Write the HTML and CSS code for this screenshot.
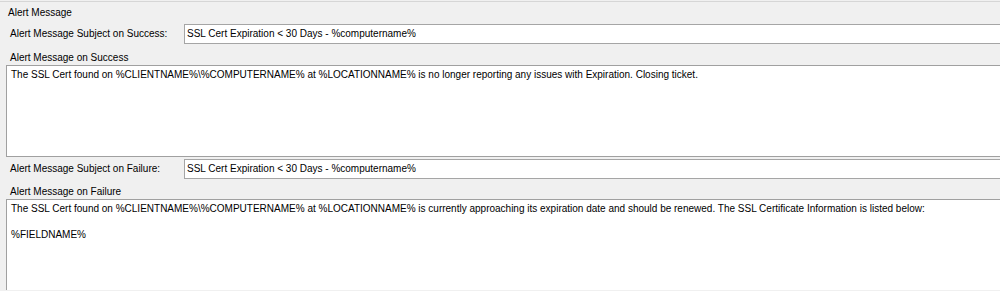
FILE: index.html
```html
<!DOCTYPE html>
<html>
<head>
<meta charset="utf-8">
<link rel="stylesheet" href="styles.css">
</head>
<body>
<div class="panel">
  <div class="heading">Alert Message</div>
  <div class="row">
    <div class="row-label">Alert Message Subject on Success:</div>
    <div class="input">SSL Cert Expiration &lt; 30 Days - %computername%</div>
  </div>
  <div class="field-label first">Alert Message on Success</div>
  <div class="textarea success">The SSL Cert found on %CLIENTNAME%\%COMPUTERNAME% at %LOCATIONNAME% is no longer reporting any issues with Expiration. Closing ticket.</div>
  <div class="row">
    <div class="row-label">Alert Message Subject on Failure:</div>
    <div class="input">SSL Cert Expiration &lt; 30 Days - %computername%</div>
  </div>
  <div class="field-label second">Alert Message on Failure</div>
  <div class="textarea failure">The SSL Cert found on %CLIENTNAME%\%COMPUTERNAME% at %LOCATIONNAME% is currently approaching its expiration date and should be renewed. The SSL Certificate Information is listed below:

%FIELDNAME%</div>
</div>
</body>
</html>
```
FILE: styles.css
```css
html, body {
  margin: 0;
  padding: 0;
  background: #f0f0f0;
  overflow: hidden;
}
body {
  font-family: "Liberation Sans", Arial, sans-serif;
  font-size: 10px;
  color: #000;
  width: 1000px;
  height: 291px;
}
.panel {
  margin-top: 1px;
  border-top: 1px solid #d6d6d6;
  padding-left: 6px;
  overflow: hidden;
}
.heading {
  margin-top: 5px;
  padding-left: 2px;
  line-height: 12px;
  height: 12px;
}
.row {
  display: flex;
  align-items: center;
  margin-top: 5px;
  margin-right: -20px;
}
.textarea + .row {
  margin-top: 2px;
}
.row-label {
  width: 174px;
  padding-left: 4px;
  flex: none;
  line-height: 12px;
}
.input {
  flex: 1;
  height: 18px;
  line-height: 18px;
  background: #fff;
  border: 1px solid #a5a5a5;
  padding-left: 2px;
  white-space: nowrap;
}
.field-label {
  padding-left: 4px;
  line-height: 12px;
  height: 12px;
  margin-bottom: 1px;
}
.field-label.first {
  margin-top: 8px;
}
.field-label.second {
  margin-top: 7px;
}
.textarea {
  background: #fff;
  border: 1px solid #a0a0a0;
  margin-right: -20px;
  padding: 2px 4px 0 4px;
  line-height: 13px;
  white-space: pre-wrap;
  box-sizing: border-box;
}
.textarea.success {
  height: 92px;
}
.textarea.failure {
  height: 91px;
  border-bottom: none;
}
```
